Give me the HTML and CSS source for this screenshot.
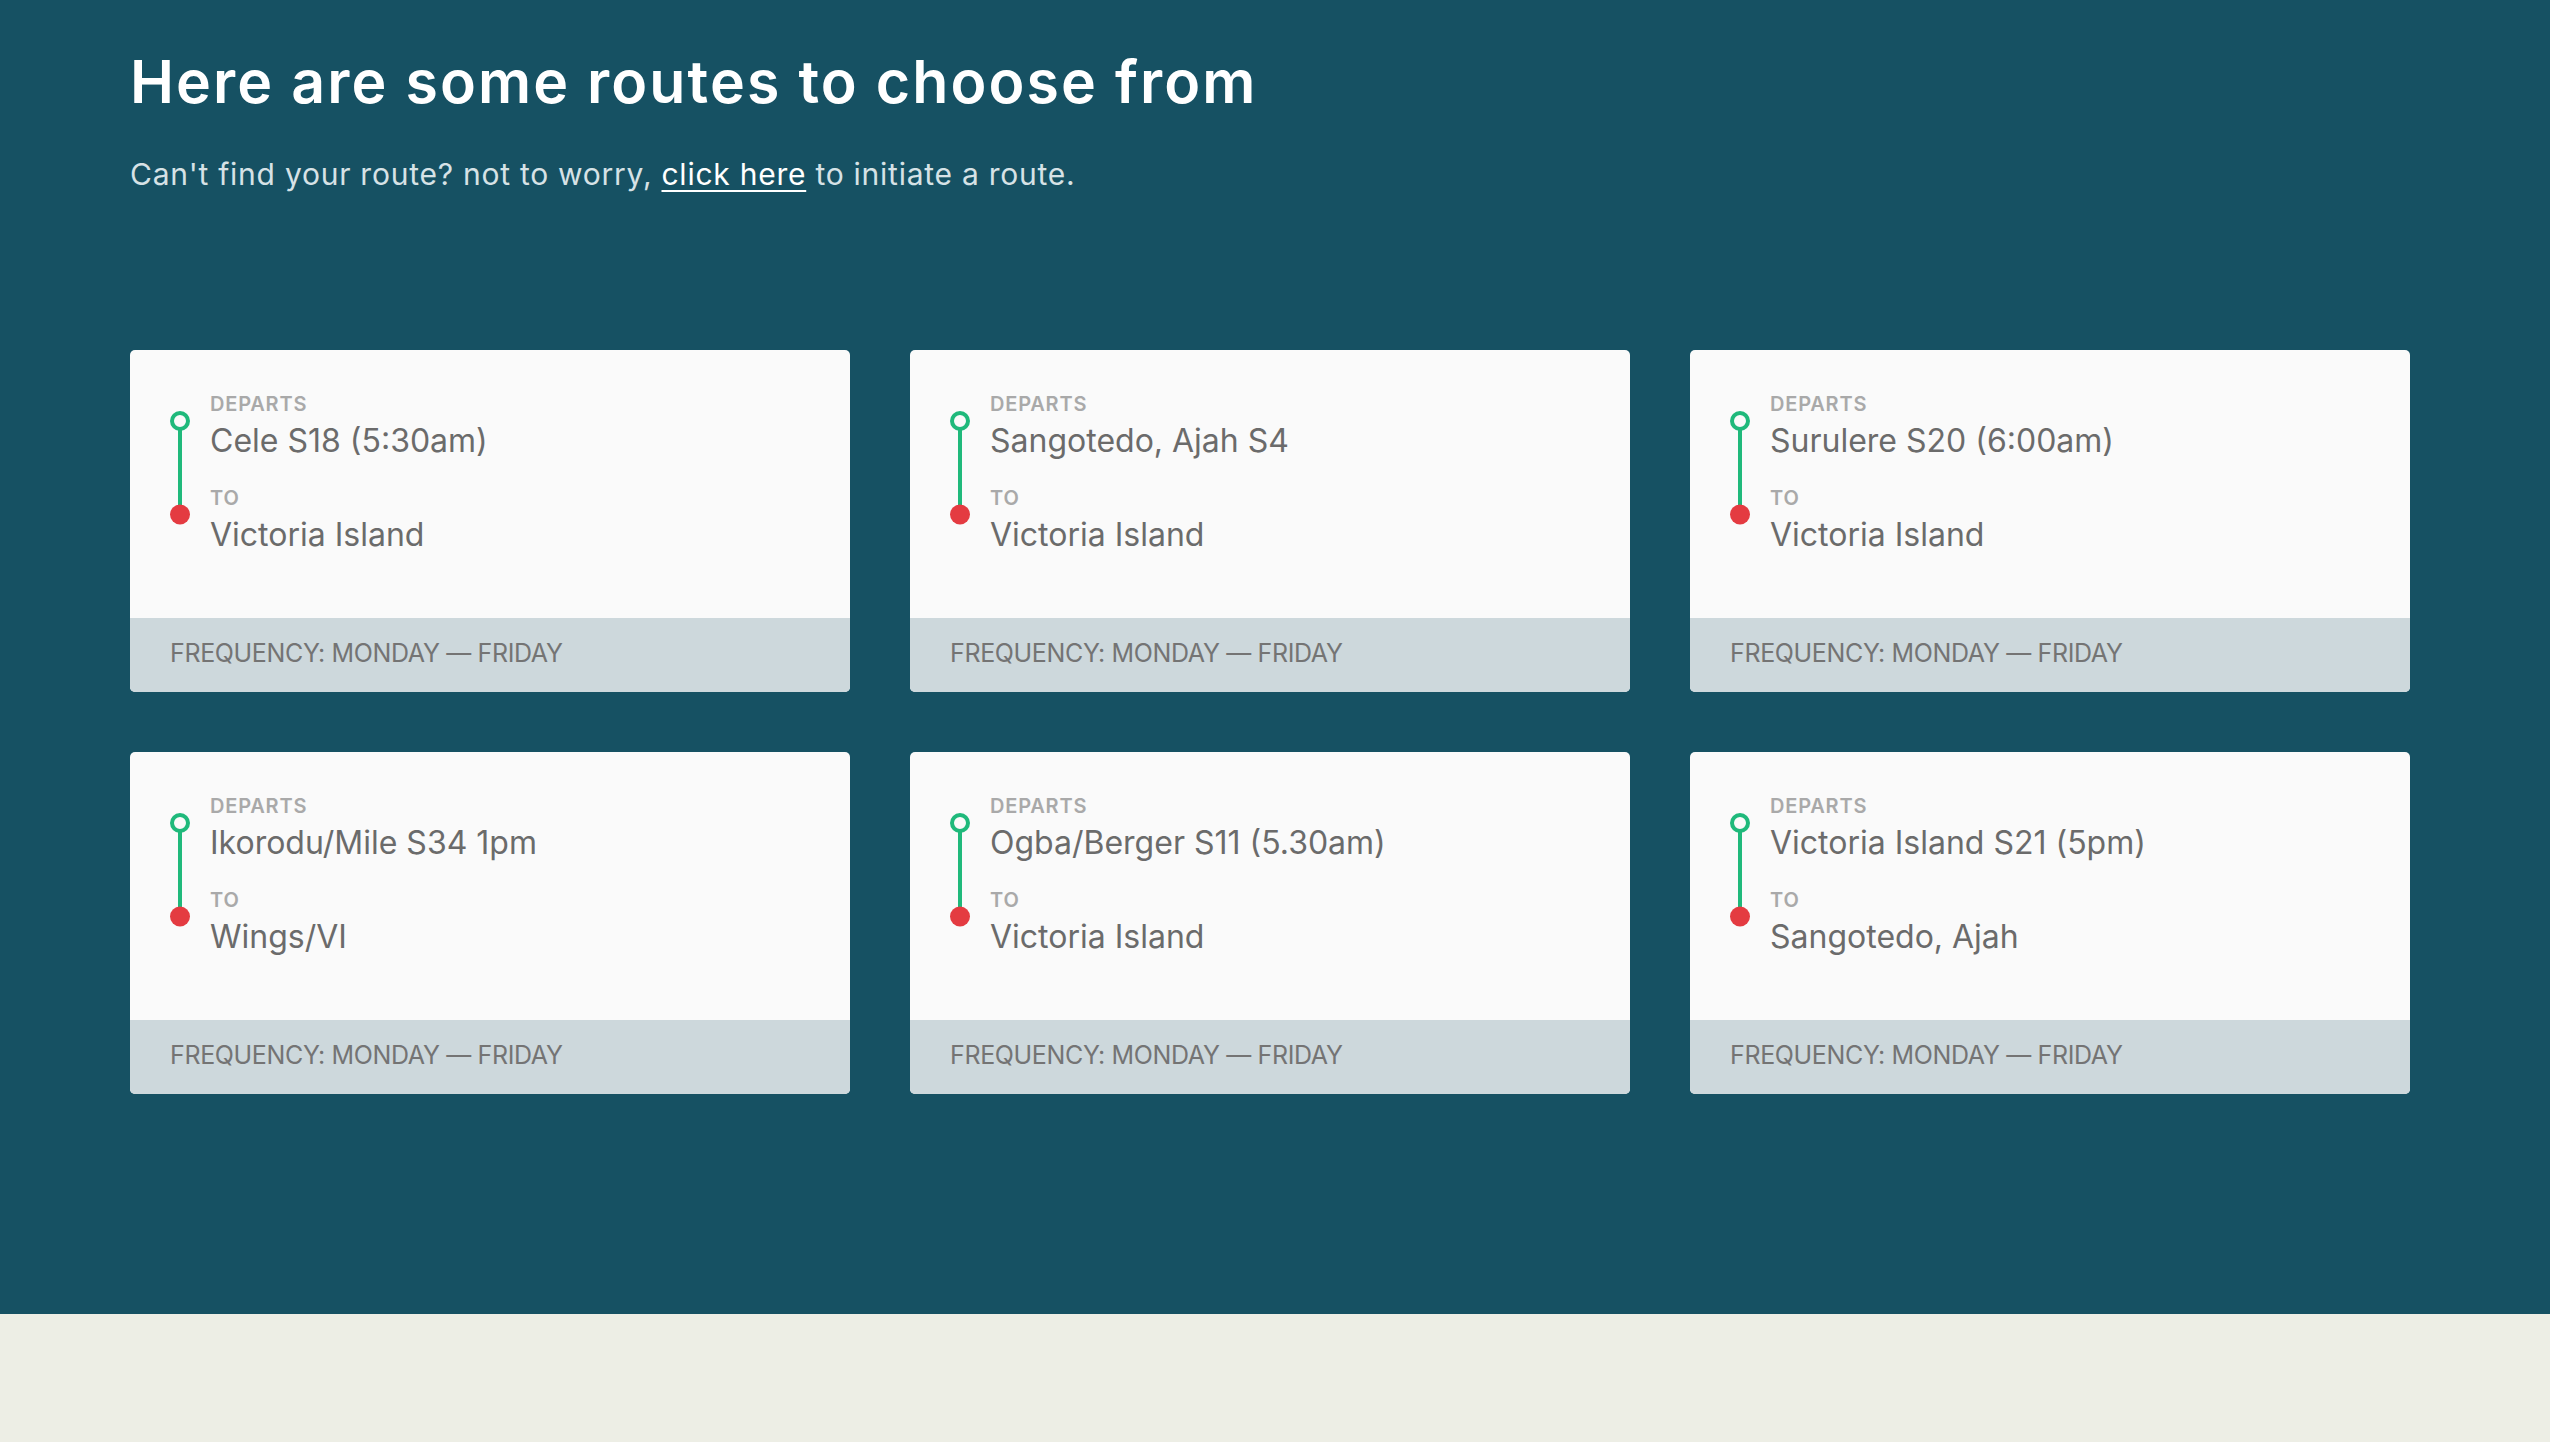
FILE: index.html
```html
<!DOCTYPE html>
<html lang="en">
<head>
<meta charset="utf-8">
<title>Routes</title>
<link rel="stylesheet" href="styles.css">
</head>
<body>
<section class="hero">
  <h1 class="title">Here are some routes to choose from</h1>
  <p class="subtitle">Can't find your route? not to worry, <a class="link" href="#">click here</a> to initiate a route.</p>
  <div class="grid">
    <div class="card">
      <div class="card-body">
        <svg class="route" width="20" height="114" viewBox="0 0 20 114"><line x1="10" y1="18" x2="10" y2="100" stroke="#1fb97b" stroke-width="4"/><circle cx="10" cy="10" r="8" fill="#fafafa" stroke="#1fb97b" stroke-width="4"/><circle cx="10" cy="103.5" r="10" fill="#e43b41"/></svg>
        <div class="stops">
          <div class="label">DEPARTS</div>
          <div class="place">Cele S18 (5:30am)</div>
          <div class="label second">TO</div>
          <div class="place">Victoria Island</div>
        </div>
      </div>
      <div class="card-foot">FREQUENCY: MONDAY — FRIDAY</div>
    </div>
    <div class="card">
      <div class="card-body">
        <svg class="route" width="20" height="114" viewBox="0 0 20 114"><line x1="10" y1="18" x2="10" y2="100" stroke="#1fb97b" stroke-width="4"/><circle cx="10" cy="10" r="8" fill="#fafafa" stroke="#1fb97b" stroke-width="4"/><circle cx="10" cy="103.5" r="10" fill="#e43b41"/></svg>
        <div class="stops">
          <div class="label">DEPARTS</div>
          <div class="place">Sangotedo, Ajah S4</div>
          <div class="label second">TO</div>
          <div class="place">Victoria Island</div>
        </div>
      </div>
      <div class="card-foot">FREQUENCY: MONDAY — FRIDAY</div>
    </div>
    <div class="card">
      <div class="card-body">
        <svg class="route" width="20" height="114" viewBox="0 0 20 114"><line x1="10" y1="18" x2="10" y2="100" stroke="#1fb97b" stroke-width="4"/><circle cx="10" cy="10" r="8" fill="#fafafa" stroke="#1fb97b" stroke-width="4"/><circle cx="10" cy="103.5" r="10" fill="#e43b41"/></svg>
        <div class="stops">
          <div class="label">DEPARTS</div>
          <div class="place">Surulere S20 (6:00am)</div>
          <div class="label second">TO</div>
          <div class="place">Victoria Island</div>
        </div>
      </div>
      <div class="card-foot">FREQUENCY: MONDAY — FRIDAY</div>
    </div>
    <div class="card">
      <div class="card-body">
        <svg class="route" width="20" height="114" viewBox="0 0 20 114"><line x1="10" y1="18" x2="10" y2="100" stroke="#1fb97b" stroke-width="4"/><circle cx="10" cy="10" r="8" fill="#fafafa" stroke="#1fb97b" stroke-width="4"/><circle cx="10" cy="103.5" r="10" fill="#e43b41"/></svg>
        <div class="stops">
          <div class="label">DEPARTS</div>
          <div class="place">Ikorodu/Mile S34 1pm</div>
          <div class="label second">TO</div>
          <div class="place">Wings/VI</div>
        </div>
      </div>
      <div class="card-foot">FREQUENCY: MONDAY — FRIDAY</div>
    </div>
    <div class="card">
      <div class="card-body">
        <svg class="route" width="20" height="114" viewBox="0 0 20 114"><line x1="10" y1="18" x2="10" y2="100" stroke="#1fb97b" stroke-width="4"/><circle cx="10" cy="10" r="8" fill="#fafafa" stroke="#1fb97b" stroke-width="4"/><circle cx="10" cy="103.5" r="10" fill="#e43b41"/></svg>
        <div class="stops">
          <div class="label">DEPARTS</div>
          <div class="place">Ogba/Berger S11 (5.30am)</div>
          <div class="label second">TO</div>
          <div class="place">Victoria Island</div>
        </div>
      </div>
      <div class="card-foot">FREQUENCY: MONDAY — FRIDAY</div>
    </div>
    <div class="card">
      <div class="card-body">
        <svg class="route" width="20" height="114" viewBox="0 0 20 114"><line x1="10" y1="18" x2="10" y2="100" stroke="#1fb97b" stroke-width="4"/><circle cx="10" cy="10" r="8" fill="#fafafa" stroke="#1fb97b" stroke-width="4"/><circle cx="10" cy="103.5" r="10" fill="#e43b41"/></svg>
        <div class="stops">
          <div class="label">DEPARTS</div>
          <div class="place">Victoria Island S21 (5pm)</div>
          <div class="label second">TO</div>
          <div class="place">Sangotedo, Ajah</div>
        </div>
      </div>
      <div class="card-foot">FREQUENCY: MONDAY — FRIDAY</div>
    </div>
  </div>
</section>
</body>
</html>
```

FILE: styles.css
```css
* { box-sizing: border-box; }
html, body { margin: 0; padding: 0; }
body {
  background: #edeee5;
  font-family: Inter, "Noto Sans", "Liberation Sans", sans-serif;
  min-height: 1442px;
}
.hero {
  background: #165163;
  padding: 46px 140px 220px 130px;
}
.title {
  margin: 0;
  color: #ffffff;
  font-size: 59px;
  line-height: 72px;
  font-weight: 600;
  letter-spacing: 2.1px;
}
.subtitle {
  margin: 38px 0 0 0;
  color: #d6e2e6;
  font-size: 30px;
  line-height: 36px;
  font-weight: 400;
  letter-spacing: 0.75px;
}
.link { color: #ffffff; text-decoration: underline; text-underline-offset: 5px; text-decoration-thickness: 2px; }
.grid {
  margin-top: 158px;
  display: grid;
  grid-template-columns: repeat(3, 720px);
  column-gap: 60px;
  row-gap: 60px;
}
.card {
  background: #fafafa;
  border-radius: 5px;
  overflow: hidden;
}
.card-body {
  display: flex;
  align-items: flex-start;
  gap: 20px;
  padding: 42px 40px 64px 40px;
  height: 268px;
}
.route { flex: none; margin-top: 19px; display: block; }
.stops { display: flex; flex-direction: column; }
.label {
  color: #a9a9a9;
  font-size: 20px;
  line-height: 24px;
  font-weight: 600;
  letter-spacing: 0.8px;
  margin-bottom: 6px;
}
.label.second { margin-top: 26px; }
.place {
  color: #6b6b6b;
  font-size: 32px;
  line-height: 38px;
  font-weight: 400;
}
.card-foot {
  background: #cdd8dc;
  height: 74px;
  padding: 20px 40px 24px 40px;
  color: #747474;
  font-size: 25px;
  line-height: 30px;
  font-weight: 400;
  letter-spacing: -0.35px;
}
```
